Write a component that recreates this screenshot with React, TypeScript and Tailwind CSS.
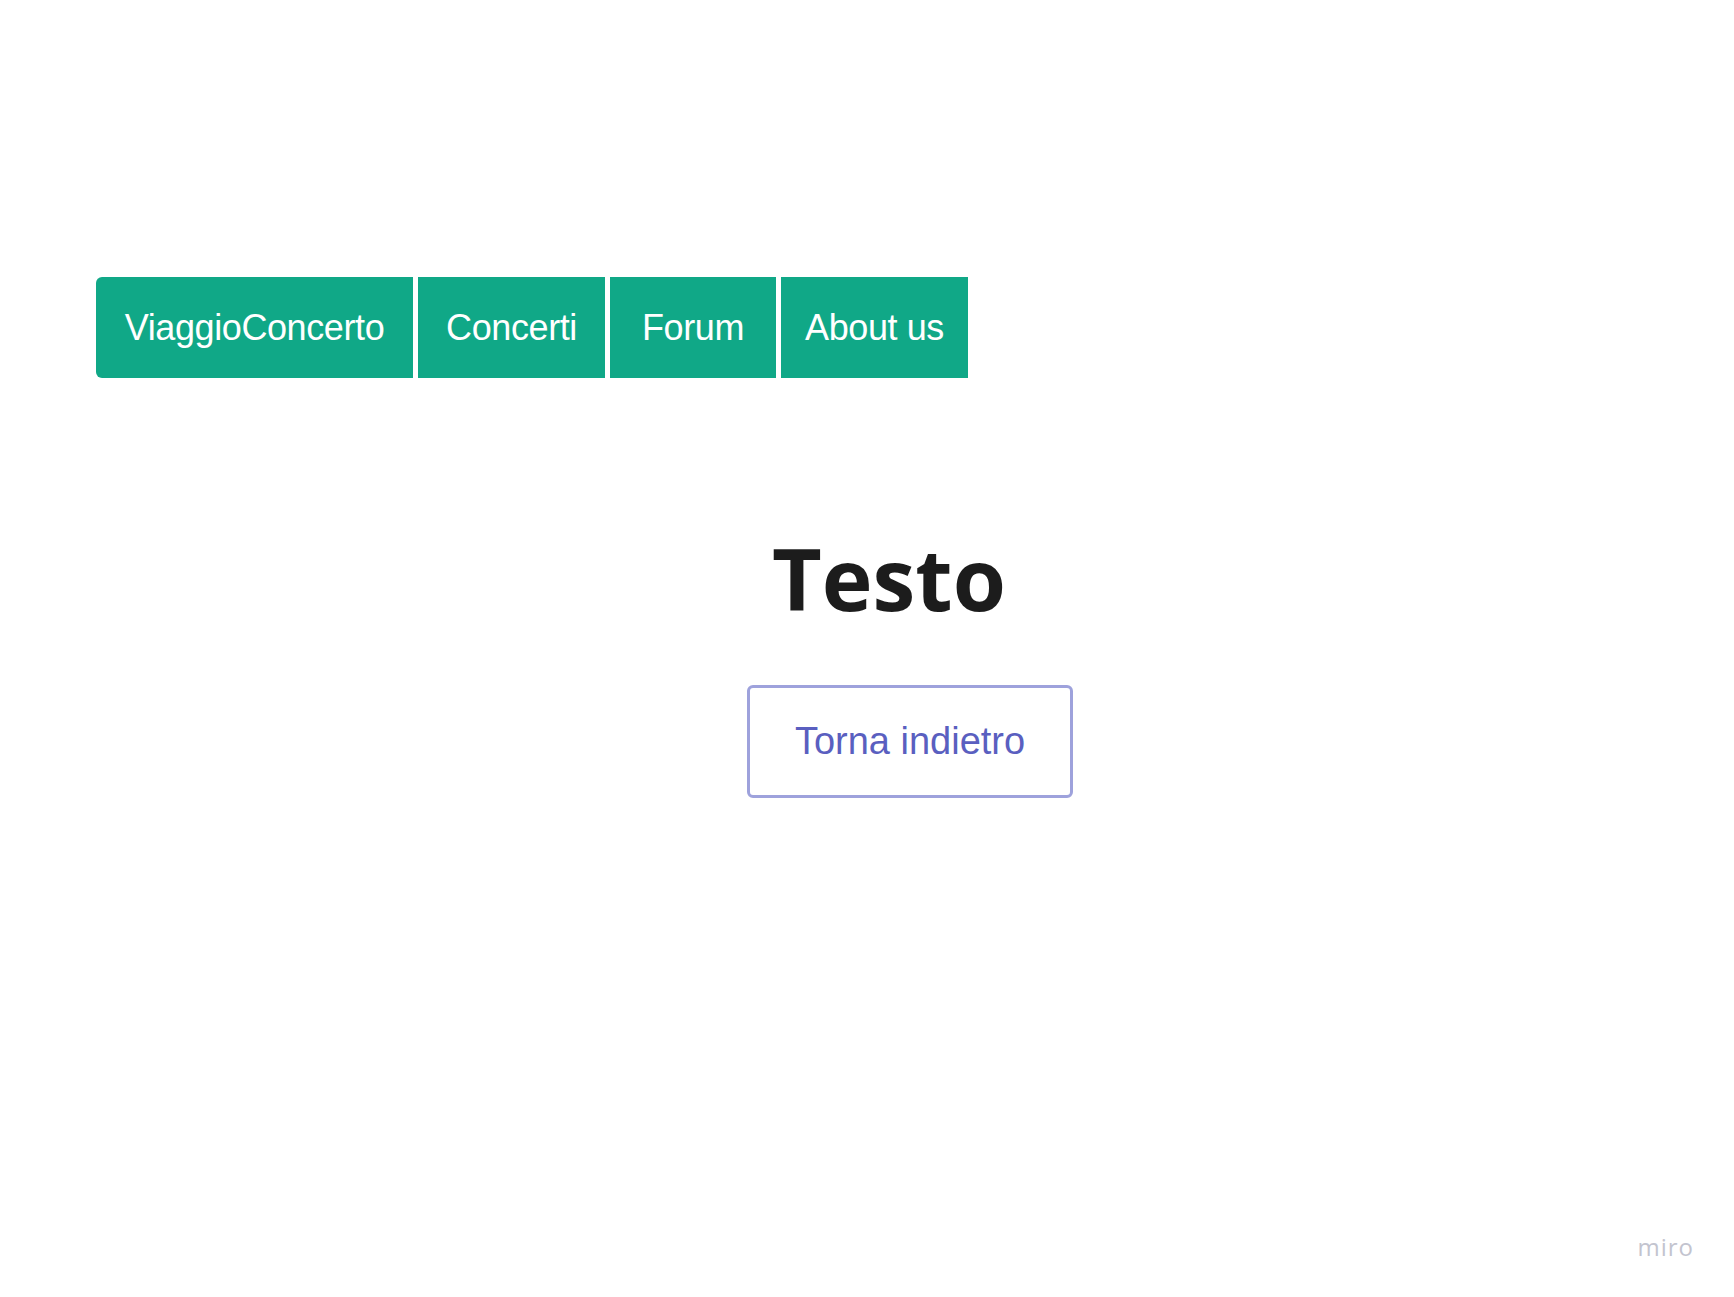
import React from "react";

const navItems = [
  { label: "ViaggioConcerto", width: "w-[317px]", first: true },
  { label: "Concerti", width: "w-[187px]" },
  { label: "Forum", width: "w-[166px]" },
  { label: "About us", width: "w-[187px]" },
];

export default function App() {
  return (
    <div className="relative min-h-[1297px] w-full bg-white pt-[277px]">
      {/* top navigation */}
      <nav className="ml-[96px] flex gap-[5px] font-['Liberation_Sans',Arial,sans-serif]">
        {navItems.map((item) => (
          <a
            key={item.label}
            href="#"
            className={`flex h-[101px] ${item.width} items-center justify-center bg-[#10a887] text-[36px] tracking-[-0.4px] text-white ${item.first ? "rounded-l-[6px]" : ""}`}
          >
            {item.label}
          </a>
        ))}
      </nav>

      {/* content */}
      <div className="flex flex-col items-start">
        <h1 className="ml-[772px] mt-[157px] font-['Open_Sans','Noto_Sans',sans-serif] text-[86px] font-bold leading-none text-[#1c1c1c]">
          Testo
        </h1>
        <button className="ml-[747px] mt-[64px] flex h-[113px] w-[326px] items-center justify-center rounded-[6px] border-[3px] border-[#9ea2dc] bg-white font-['Liberation_Sans',Arial,sans-serif] text-[38px] text-[#5a5fc0]">
          Torna indietro
        </button>
      </div>

      {/* watermark */}
      <span className="absolute bottom-[32px] right-[40px] font-['Open_Sans','Noto_Sans',sans-serif] text-[24px] tracking-[1px] text-[#c3c4cf]">
        miro
      </span>
    </div>
  );
}
